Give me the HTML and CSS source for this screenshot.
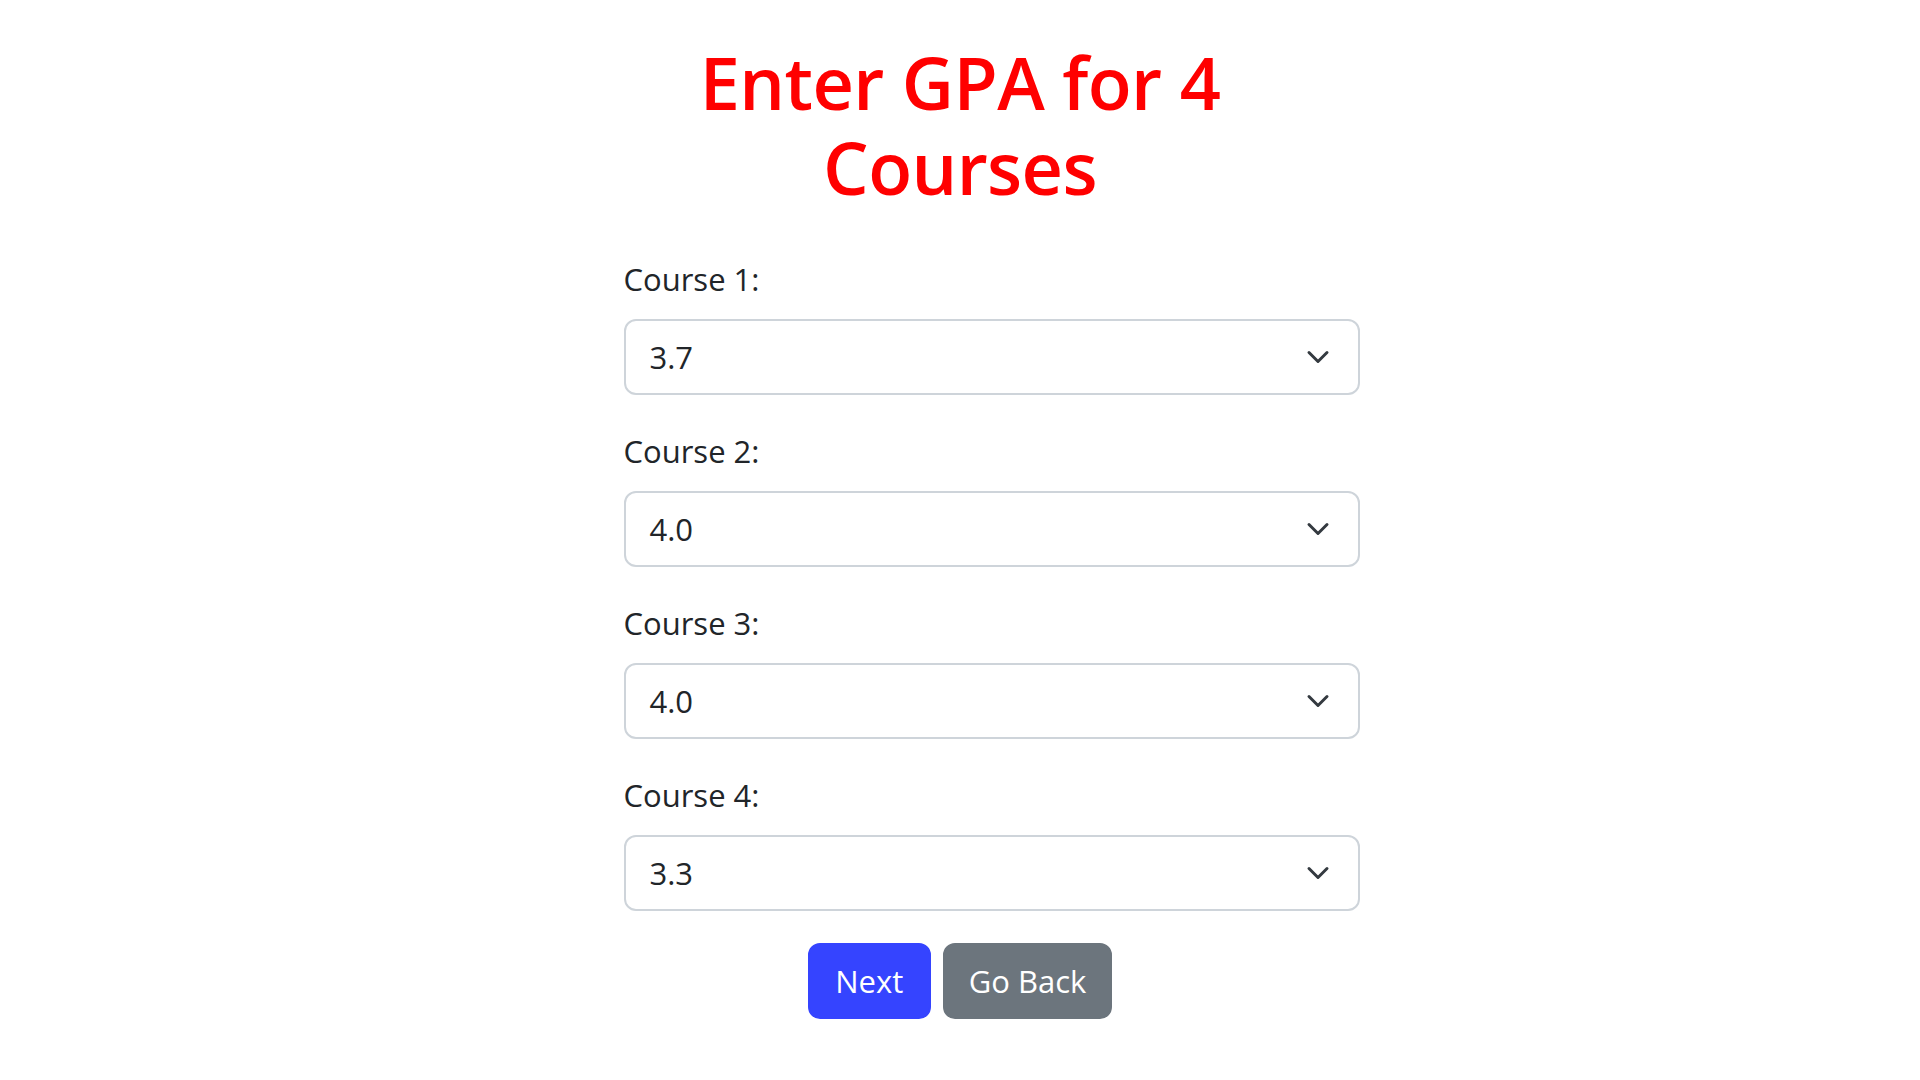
FILE: index.html
```html
<!DOCTYPE html>
<html lang="en">
<head>
<meta charset="utf-8">
<title>Enter GPA</title>
<link rel="stylesheet" href="styles.css">
</head>
<body>
<main class="page">
  <h1 class="title">Enter GPA for 4 Courses</h1>
  <form class="gpa-form">
    <div class="field">
      <label class="field-label">Course 1:</label>
      <div class="select"><span class="select-value">3.7</span><svg class="chevron" viewBox="0 0 16 16"><path d="m2 5 6 6 6-6" fill="none" stroke="#343a40" stroke-width="2" stroke-linecap="round" stroke-linejoin="round"/></svg></div>
    </div>
    <div class="field">
      <label class="field-label">Course 2:</label>
      <div class="select"><span class="select-value">4.0</span><svg class="chevron" viewBox="0 0 16 16"><path d="m2 5 6 6 6-6" fill="none" stroke="#343a40" stroke-width="2" stroke-linecap="round" stroke-linejoin="round"/></svg></div>
    </div>
    <div class="field">
      <label class="field-label">Course 3:</label>
      <div class="select"><span class="select-value">4.0</span><svg class="chevron" viewBox="0 0 16 16"><path d="m2 5 6 6 6-6" fill="none" stroke="#343a40" stroke-width="2" stroke-linecap="round" stroke-linejoin="round"/></svg></div>
    </div>
    <div class="field">
      <label class="field-label">Course 4:</label>
      <div class="select"><span class="select-value">3.3</span><svg class="chevron" viewBox="0 0 16 16"><path d="m2 5 6 6 6-6" fill="none" stroke="#343a40" stroke-width="2" stroke-linecap="round" stroke-linejoin="round"/></svg></div>
    </div>
  </form>
  <div class="actions">
    <button class="btn btn-next" type="button">Next</button>
    <button class="btn btn-back" type="button">Go Back</button>
  </div>
</main>
</body>
</html>
```

FILE: styles.css
```css
html, body {
  margin: 0;
  padding: 0;
  background: #ffffff;
}

body {
  font-family: "Open Sans", "Noto Sans", sans-serif;
  color: #212529;
}

.page {
  display: flex;
  flex-direction: column;
  align-items: center;
}

.title {
  width: 700px;
  margin: 40px 0 45px;
  text-align: center;
  font-size: 72px;
  line-height: 85px;
  font-weight: 600;
  color: #ff0000;
  letter-spacing: -0.6px;
}

.gpa-form {
  width: 736px;
  margin-left: 63px;
  display: flex;
  flex-direction: column;
  gap: 32px;
}

.field {
  display: flex;
  flex-direction: column;
  gap: 16px;
}

.field-label {
  font-size: 31px;
  line-height: 48px;
  height: 48px;
}

.select {
  box-sizing: border-box;
  height: 76px;
  border: 2px solid #ced4da;
  border-radius: 12px;
  padding: 0 28px 0 24px;
  display: flex;
  align-items: center;
  justify-content: space-between;
  font-size: 31px;
  background: #fff;
}

.select-value {
  line-height: 48px;
}

.chevron {
  width: 24px;
  height: 24px;
  display: block;
}

.actions {
  margin-top: 32px;
  display: flex;
  gap: 12px;
}

.btn {
  box-sizing: border-box;
  height: 76px;
  padding: 0 24px;
  border: 2px solid transparent;
  border-radius: 12px;
  font-family: inherit;
  font-size: 31px;
  color: #ffffff;
  cursor: pointer;
}

.btn-next {
  min-width: 123px;
  background: #3544ff;
  border-color: #3544ff;
}

.btn-back {
  min-width: 169px;
  background: #6c757d;
  border-color: #6c757d;
}
```
